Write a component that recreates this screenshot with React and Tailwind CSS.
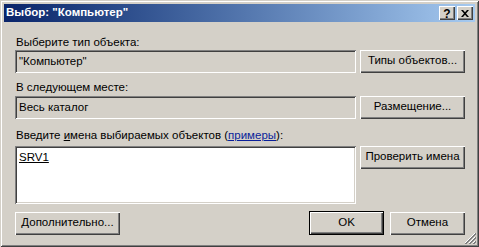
import React from "react";

const raised =
  "shadow-[inset_1px_1px_#ffffff,inset_-1px_-1px_#404040,inset_-2px_-2px_#808080]";
const sunken =
  "shadow-[inset_1px_1px_#808080,inset_-1px_-1px_#ffffff,inset_2px_2px_#404040,inset_-2px_-2px_#d4d0c8]";

function Btn({ children, className = "" }) {
  return (
    <div
      className={`h-[23px] w-[105px] flex items-center justify-center bg-[#d4d0c8] ${raised} ${className}`}
    >
      <span className="leading-none pb-[1px]">{children}</span>
    </div>
  );
}

function Field({ children }) {
  return (
    <div
      className={`h-[23px] w-[341px] flex items-center pl-[4px] bg-[#d4d0c8] ${sunken}`}
    >
      <span className="leading-none">{children}</span>
    </div>
  );
}

function TitleBtn({ children, className = "" }) {
  return (
    <div
      className={`w-[16px] h-[14px] bg-[#d4d0c8] flex items-center justify-center ${raised} ${className}`}
    >
      {children}
    </div>
  );
}

export default function App() {
  return (
    <div className="relative w-[479px] h-[247px] bg-[#d4d0c8] p-[4px] flex flex-col shadow-[inset_1px_1px_#d4d0c8,inset_-1px_-1px_#404040,inset_2px_2px_#ffffff,inset_-2px_-2px_#808080] font-['Liberation_Sans',sans-serif] text-[11.5px] text-black">
      <div className="h-[18px] flex items-center bg-linear-to-r from-[#0a246a] to-[#a6caf0] pl-[2px] pr-[2px]">
        <span className="flex-1 font-bold text-white leading-none pb-[1px]">
          Выбор: "Компьютер"
        </span>
        <TitleBtn>
          <span className="font-bold text-[12px] leading-none pt-[1px]">?</span>
        </TitleBtn>
        <TitleBtn className="ml-[2px]">
          <svg width="8" height="7" viewBox="0 0 8 7">
            <path
              d="M0 0h2l2 2.3L6 0h2L5 3.5 8 7H6L4 4.7 2 7H0l3-3.5z"
              fill="#000"
            />
          </svg>
        </TitleBtn>
      </div>

      <div className="flex flex-col pl-[11px] pr-[10px]">
        <div className="mt-[14px] h-[13px] leading-[13px] pl-[1px]">
          Выберите тип объекта:
        </div>
        <div className="mt-[1px] flex gap-[4px]">
          <Field>"Компьютер"</Field>
          <Btn>Типы объектов...</Btn>
        </div>

        <div className="mt-[8px] h-[13px] leading-[13px] pl-[1px]">
          В следующем месте:
        </div>
        <div className="mt-[2px] flex gap-[4px]">
          <Field>Весь каталог</Field>
          <Btn>Размещение...</Btn>
        </div>

        <div className="mt-[10px] h-[13px] leading-[13px] pl-[1px]">
          Введите <span className="underline">и</span>мена выбираемых объектов (
          <span className="underline text-[#0a1f9a]">примеры</span>):
        </div>
        <div className="mt-[4px] flex gap-[4px] items-start">
          <div
            className={`h-[58px] w-[341px] bg-white pl-[4px] pt-[3px] ${sunken}`}
          >
            <span className="underline leading-none">SRV1</span>
          </div>
          <Btn>Проверить имена</Btn>
        </div>

        <div className="mt-[7px] flex items-center">
          <Btn>Дополнительно...</Btn>
          <div className="flex-1" />
          <div className="w-[75px] h-[24px] border border-black">
            <div
              className={`w-full h-full flex items-center justify-center ${raised}`}
            >
              <span className="leading-none pb-[1px]">OK</span>
            </div>
          </div>
          <Btn className="ml-[6px] !w-[75px]">Отмена</Btn>
        </div>
      </div>

      <svg
        className="absolute right-[3px] bottom-[3px]"
        width="12"
        height="12"
        viewBox="0 0 12 12"
      >
        <path d="M11 1L1 11" stroke="#ffffff" strokeWidth="1" />
        <path d="M12 1L1 12M12 2L2 12" stroke="#808080" strokeWidth="1" />
        <path d="M11 5L5 11" stroke="#ffffff" strokeWidth="1" />
        <path d="M12 5L5 12M12 6L6 12" stroke="#808080" strokeWidth="1" />
        <path d="M11 9L9 11" stroke="#ffffff" strokeWidth="1" />
        <path d="M12 9L9 12M12 10L10 12" stroke="#808080" strokeWidth="1" />
      </svg>
    </div>
  );
}
